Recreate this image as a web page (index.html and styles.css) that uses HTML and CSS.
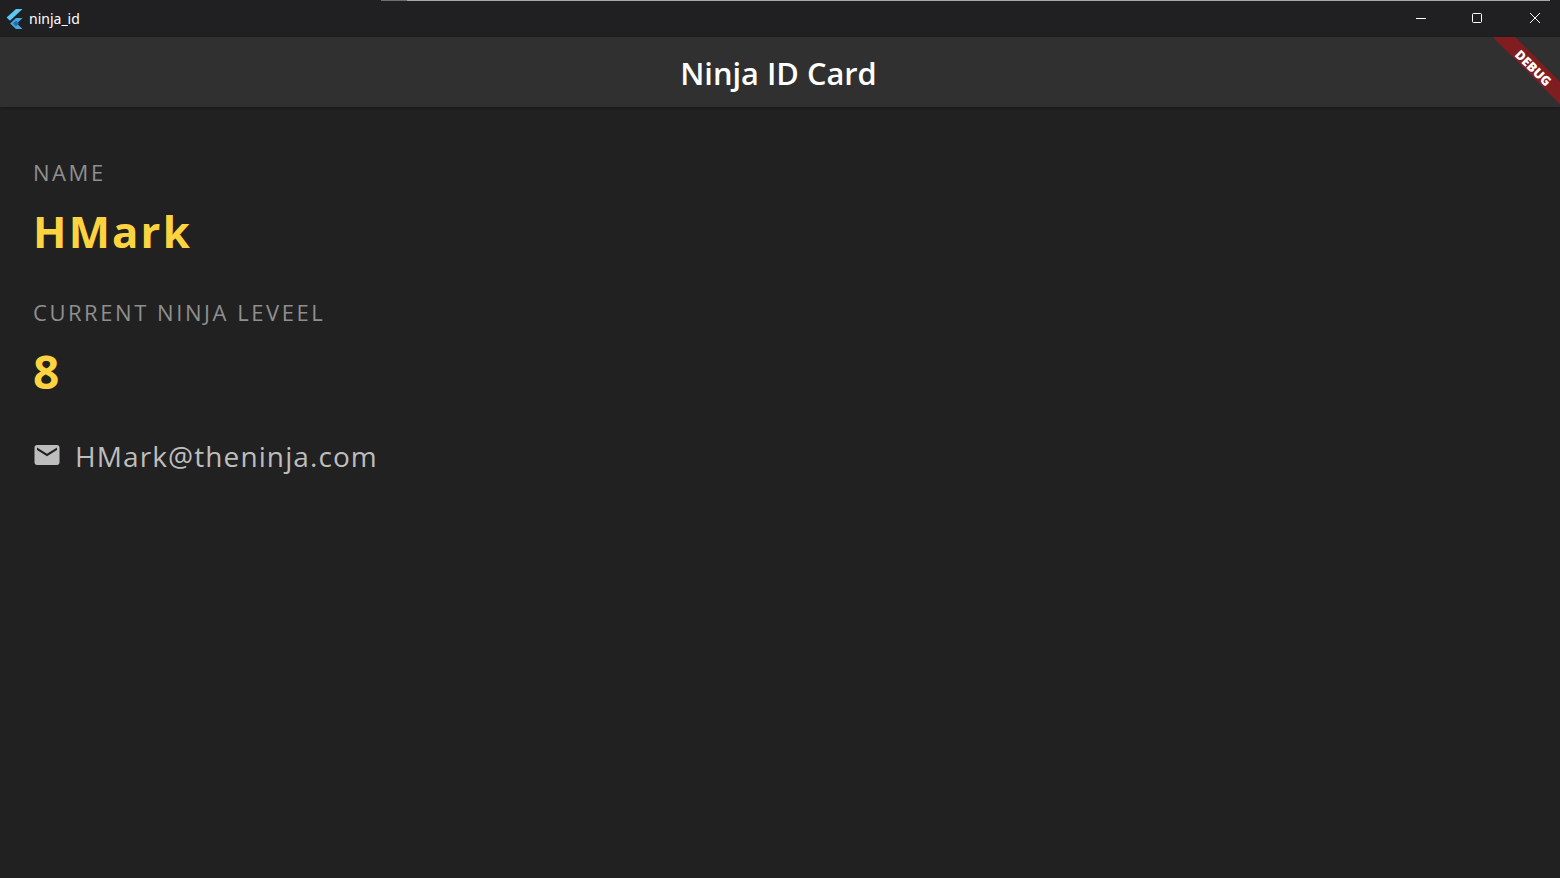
FILE: index.html
```html
<!DOCTYPE html>
<html lang="en">
<head>
<meta charset="UTF-8" />
<title>ninja_id</title>
<link rel="stylesheet" href="styles.css">
</head>
<body>
<div class="titlebar">
  <div class="app-title">
    <svg class="flutter-logo" width="18" height="20" viewBox="0 0 18 20">
      <path d="M11 0h6.5L5 11.8 1.6 8.6z" fill="#5cc8f5"/>
      <path d="M11 9h6.5l-5.6 5.4 5.6 5.6H11L5.2 14.4z" fill="#4aa8e0"/>
      <path d="M8 14.4l3-3 3 3-3 3z" fill="#1c6fb5"/>
    </svg>
    <span>ninja_id</span>
  </div>
  <div class="win-buttons">
    <svg width="10" height="10" viewBox="0 0 10 10"><path d="M0 5.5h10" stroke="#fff" fill="none"/></svg>
    <svg class="win-max" width="10" height="10" viewBox="0 0 10 10"><rect x="0.5" y="0.5" width="9" height="9" rx="1" stroke="#fff" fill="none"/></svg>
    <svg width="10" height="10" viewBox="0 0 10 10"><path d="M0 0l10 10M10 0L0 10" stroke="#fff" fill="none"/></svg>
  </div>
</div>

<header class="appbar">
  <h1>Ninja ID Card</h1>
  <div class="debug-banner"><span>DEBUG</span></div>
</header>

<main class="card">
  <div class="label">NAME</div>
  <div class="value name">HMark</div>
  <div class="label">CURRENT NINJA LEVEEL</div>
  <div class="value level">8</div>
  <div class="email">
    <svg width="30" height="30" viewBox="0 0 24 24"><path d="M20 4H4c-1.1 0-2 .9-2 2v12c0 1.1.9 2 2 2h16c1.1 0 2-.9 2-2V6c0-1.1-.9-2-2-2zm0 4l-8 5-8-5V6l8 5 8-5v2z" fill="#bdbdbd"/></svg>
    <span>HMark@theninja.com</span>
  </div>
</main>
</body>
</html>
```
FILE: styles.css
```css
html, body { height: 100%; }
body { margin: 0; background: #212121; font-family: "Open Sans", sans-serif; display: flex; flex-direction: column; overflow: hidden; }

.titlebar { height: 37px; background: linear-gradient(90deg, transparent 381px, #6e6e6e 381px, #6e6e6e 407px, #a8a8a8 407px, #a8a8a8 1550px, transparent 1550px) top / 100% 1px no-repeat #202023; display: flex; justify-content: space-between; align-items: center; color: #fff; box-sizing: border-box; padding-bottom: 2px; }
.app-title { display: flex; align-items: center; gap: 6px; padding-left: 5px; padding-top: 2px; font-size: 14px; font-family: "Noto Sans", sans-serif; }
.flutter-logo { display: block; }
.win-buttons { display: flex; gap: 46px; padding-right: 20px; }
.win-buttons svg { display: block; }
.win-max { margin-right: 2px; }

.appbar { height: 70px; background: #303030; display: flex; align-items: center; justify-content: center; position: relative; overflow: hidden; box-shadow: 0 1px 3px rgba(0,0,0,.25); }
.appbar h1 { margin: 2px 0 0 -3px; font-size: 30.8px; font-weight: 600; color: #fff; }
.debug-banner { position: absolute; top: 21px; right: -33px; width: 120px; height: 16px; background: #7f1d20; transform: rotate(45deg); text-align: center; line-height: 16px; }
.debug-banner span { color: #fff; font-size: 13px; font-weight: 800; font-family: "Open Sans", sans-serif; margin-left: 3px; }

.card { padding: 51px 33px 0; }
.label { font-size: 22px; letter-spacing: 2.55px; color: #8f8f8f; line-height: 29px; }
.value { color: #fdd43f; font-weight: 700; font-size: 43.7px; letter-spacing: 2.2px; line-height: 58px; margin: 15px 0 38px; }
.level { font-size: 46px; margin-bottom: 37px; }
.email { display: flex; align-items: center; gap: 13px; margin-left: -1px; color: #bdbdbd; font-size: 28px; letter-spacing: 1.1px; }
.email svg { display: block; margin-top: -2px; }
```
